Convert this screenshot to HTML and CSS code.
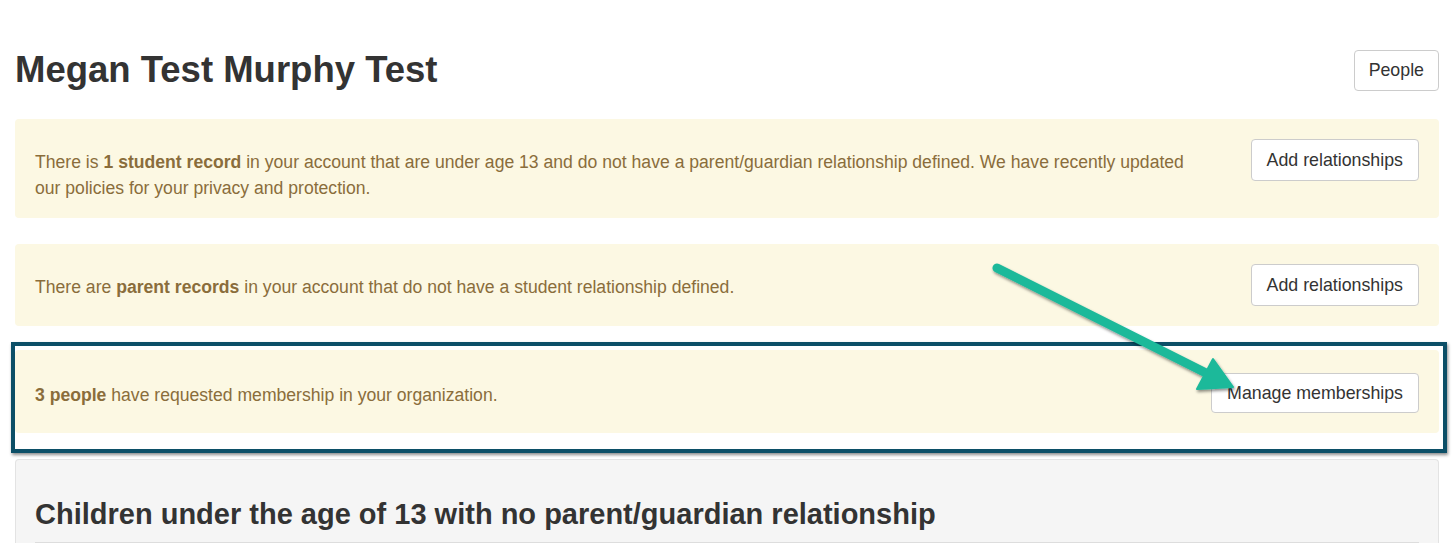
FILE: index.html
```html
<!DOCTYPE html>
<html lang="en">
<head>
<meta charset="utf-8">
<title>Megan Test Murphy Test</title>
<link rel="stylesheet" href="styles.css">
</head>
<body>
<div class="page">
  <header class="page-header">
    <h1 class="page-title">Megan Test Murphy Test</h1>
    <button class="btn">People</button>
  </header>

  <div class="alert alert-first">
    <p class="alert-text">There is <strong>1 student record</strong> in your account that are under age 13 and do not have a parent/guardian relationship defined. We have recently updated our policies for your privacy and protection.</p>
    <button class="btn">Add relationships</button>
  </div>

  <div class="alert alert-second">
    <p class="alert-text">There are <strong>parent records</strong> in your account that do not have a student relationship defined.</p>
    <button class="btn">Add relationships</button>
  </div>

  <div class="highlight">
    <div class="alert alert-third">
      <p class="alert-text"><strong>3 people</strong> have requested membership in your organization.</p>
      <button class="btn btn-small">Manage memberships</button>
    </div>
  </div>

  <section class="panel">
    <h2 class="panel-title">Children under the age of 13 with no parent/guardian relationship</h2>
  </section>
</div>

<svg class="annotation" width="1454" height="544" viewBox="0 0 1454 544" aria-hidden="true">
  <defs>
    <filter id="shadow" x="-10%" y="-10%" width="130%" height="140%">
      <feDropShadow dx="1" dy="2" stdDeviation="1.6" flood-color="#000" flood-opacity="0.45"/>
    </filter>
  </defs>
  <g filter="url(#shadow)" fill="#1bb99a" stroke="#1bb99a">
    <line x1="997" y1="268" x2="1208" y2="374" stroke-width="9" stroke-linecap="round"/>
    <polygon points="1233,387 1213,359 1197,389" stroke-width="2" stroke-linejoin="round"/>
  </g>
</svg>
</body>
</html>
```

FILE: styles.css
```css
* { box-sizing: border-box; }

html, body {
  margin: 0;
  padding: 0;
  background: #fff;
}

body {
  font-family: "Liberation Sans", Arial, Helvetica, sans-serif;
  color: #333;
  width: 1454px;
  height: 544px;
  overflow: hidden;
  position: relative;
}

.page {
  padding: 50px 15px 0 15px;
}

.page-header {
  display: flex;
  justify-content: space-between;
  align-items: center;
  height: 41px;
  margin-bottom: 28px;
}

.page-title {
  margin: 0;
  font-size: 36.5px;
  line-height: 1.1;
  font-weight: bold;
  color: #333;
}

.btn {
  font-family: inherit;
  font-size: 17.8px;
  color: #333;
  background: #fff;
  border: 1px solid #ccc;
  border-radius: 4px;
  padding: 0 15px;
  height: 42px;
  flex: none;
  cursor: pointer;
}

.page-header .btn {
  height: 41px;
  padding: 0 14px;
}

.alert .btn {
  margin-bottom: 3px;
}

.alert .btn-small {
  height: 40px;
  padding: 0 15px;
}

.alert {
  display: flex;
  justify-content: space-between;
  align-items: flex-start;
  padding: 20px 20px 17px 20px;
  background: #fcf8e3;
  border-radius: 4px;
  color: #8a6d3b;
}

.alert-first { margin-bottom: 26px; }
.alert-second { margin-bottom: 16px; }
.alert-third { padding-top: 23px; }

.alert-text {
  flex: 1;
  margin: 10px 40px 0 0;
  font-size: 17.6px;
  line-height: 26px;
}

.alert-third .alert-text {
  margin-top: 9px;
}

.alert-text strong {
  font-weight: bold;
}

.highlight {
  margin: 0 -8px 0 -4px;
  border: 4px solid #0c4f67;
  padding: 4px 4px 16px 0;
  box-shadow: 1px 2px 3px rgba(0, 0, 0, 0.45);
}

.panel {
  margin-top: 6px;
  background: #f5f5f5;
  border: 1px solid #e3e3e3;
  border-bottom: 0;
  border-radius: 4px 4px 0 0;
  padding: 38px 19px 0 19px;
}

.panel-title {
  margin: 0;
  font-size: 29px;
  line-height: 33px;
  font-weight: bold;
  color: #333;
  padding-bottom: 11px;
  border-bottom: 1px solid #ddd;
}

.annotation {
  position: absolute;
  left: 0;
  top: 0;
  pointer-events: none;
}
```
